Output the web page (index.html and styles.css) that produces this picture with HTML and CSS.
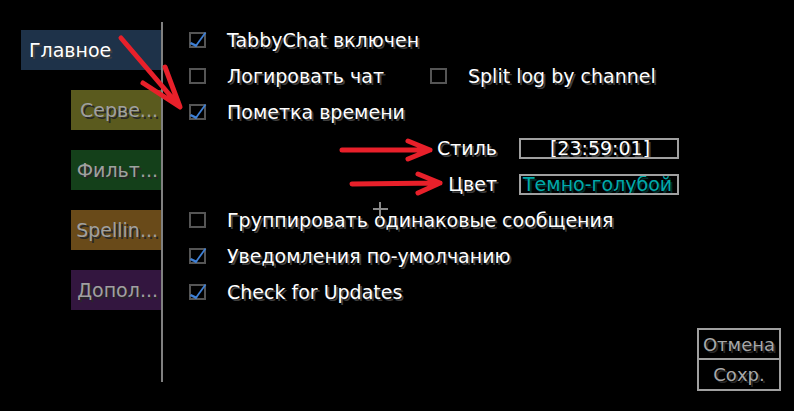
FILE: index.html
```html
<!DOCTYPE html>
<html lang="ru">
<head>
  <meta charset="UTF-8">
  <meta name="viewport" content="width=device-width, initial-scale=1.0">
  <title>TabbyChat</title>
  <link rel="stylesheet" href="styles.css">
</head>
<body>
  <div class="screen">
    <div class="sidebar">
      <div class="tab tab-main active">Главное</div>
      <div class="tab tab-server">Серве...</div>
      <div class="tab tab-filter">Фильт...</div>
      <div class="tab tab-spell">Spellin...</div>
      <div class="tab tab-extra">Допол...</div>
    </div>

    <div class="divider"></div>

    <div class="content">
      <div class="row">
        <span class="checkbox checked"></span>
        <span class="label">TabbyChat включен</span>
      </div>
      <div class="row">
        <div class="option half">
          <span class="checkbox"></span>
          <span class="label">Логировать чат</span>
        </div>
        <div class="option">
          <span class="checkbox"></span>
          <span class="label">Split log by channel</span>
        </div>
      </div>
      <div class="row">
        <span class="checkbox checked"></span>
        <span class="label">Пометка времени</span>
      </div>
      <div class="row">
        <span class="field-label">Стиль</span>
        <span class="field center">[23:59:01]</span>
      </div>
      <div class="row">
        <span class="field-label">Цвет</span>
        <span class="field aqua">Темно-голубой</span>
      </div>
      <div class="row">
        <span class="checkbox"></span>
        <span class="label">Группировать одинаковые сообщения</span>
      </div>
      <div class="row">
        <span class="checkbox checked"></span>
        <span class="label">Уведомления по-умолчанию</span>
      </div>
      <div class="row">
        <span class="checkbox checked"></span>
        <span class="label">Check for Updates</span>
      </div>

      <div class="actions">
        <button class="btn">Отмена</button>
        <button class="btn">Сохр.</button>
      </div>
    </div>
  </div>

  <!-- пометки поверх скриншота -->
  <svg class="marks" width="794" height="411" viewBox="0 0 794 411">
    <g class="arrow">
      <path d="M121 38 L180 107 M143 83 L180 107 L165 67"/>
      <path d="M342 150 L430 150 M408 141 L430 150 L408 159"/>
      <path d="M352 184 L440 183 M418 174 L440 183 L418 193"/>
    </g>
    <path class="cross" d="M373 209 H388 M380 202 V217"/>
  </svg>
</body>
</html>
```

FILE: styles.css
```css
body {
  margin: 0;
  background-color: #000;
  color: #fff;
  font-family: 'DejaVu Sans', Verdana, sans-serif;
  font-size: 19px;
  overflow: hidden;
}
.screen {
  display: flex;
  width: 794px;
  height: 411px;
}
.sidebar {
  width: 161px;
  padding-top: 30px;
  display: flex;
  flex-direction: column;
  align-items: flex-end;
  gap: 20px;
  box-sizing: border-box;
}
.tab {
  width: 90px;
  height: 40px;
  display: flex;
  align-items: center;
  justify-content: flex-end;
  padding-right: 3px;
  box-sizing: border-box;
  color: #a0a0a0;
  text-shadow: 2px 2px 0 #282828;
  white-space: nowrap;
  overflow: hidden;
}
.tab.active {
  width: 140px;
  justify-content: flex-start;
  padding-left: 8px;
  color: #fff;
  text-shadow: 2px 2px 0 #3f3f3f;
}
.tab-main { background-color: #1e3249; }
.tab-server { background-color: #5a5a1e; }
.tab-filter { background-color: #14401a; }
.tab-spell { background-color: #694a19; }
.tab-extra { background-color: #33163f; }
.divider {
  width: 2px;
  height: 360px;
  margin-top: 22px;
  background-color: #808080;
}
.content {
  flex: 1;
  display: flex;
  flex-direction: column;
  padding: 22px 13px 20px 26px;
  box-sizing: border-box;
}
.row {
  height: 36px;
  display: flex;
  align-items: center;
}
.option {
  display: flex;
  align-items: center;
}
.option.half {
  width: 241px;
}
.checkbox {
  position: relative;
  width: 17px;
  height: 16px;
  border: 2px solid #555;
  box-sizing: border-box;
  margin-right: 21px;
  flex-shrink: 0;
}
.checkbox.checked::after {
  content: '';
  position: absolute;
  left: 3px;
  top: -3px;
  width: 6px;
  height: 13px;
  border-right: 2px solid #3f80d6;
  border-bottom: 2px solid #3f80d6;
  transform: skewX(-18deg) rotate(22deg);
}
.label {
  text-shadow: 2px 2px 0 #3f3f3f;
  white-space: nowrap;
}
.field-label {
  width: 308px;
  text-align: right;
  margin-right: 22px;
  text-shadow: 2px 2px 0 #3f3f3f;
}
.field {
  width: 160px;
  height: 21px;
  border: 2px solid #a0a0a0;
  box-sizing: border-box;
  display: flex;
  align-items: center;
  padding-left: 2px;
  white-space: nowrap;
  overflow: hidden;
  line-height: 1;
  text-shadow: 2px 2px 0 #3f3f3f;
}
.field.center {
  justify-content: center;
}
.field.aqua {
  color: #00aaaa;
  text-shadow: 2px 2px 0 #002a2a;
}
.actions {
  margin-top: auto;
  align-self: flex-end;
  display: flex;
  flex-direction: column;
}
.btn {
  width: 84px;
  height: 32px;
  margin: 0;
  padding: 0;
  background-color: #000;
  border: 2px solid #a0a0a0;
  color: #a8a8a8;
  font-family: inherit;
  font-size: 18px;
  text-shadow: 2px 2px 0 #2a2a2a;
}
.btn + .btn {
  border-top: none;
  height: 31px;
}
.marks {
  position: absolute;
  left: 0;
  top: 0;
  pointer-events: none;
}
.arrow path {
  fill: none;
  stroke: #e8202a;
  stroke-width: 5;
  stroke-linecap: round;
  stroke-linejoin: round;
}
.cross {
  stroke: #8a8a8a;
  stroke-width: 2;
}
```
